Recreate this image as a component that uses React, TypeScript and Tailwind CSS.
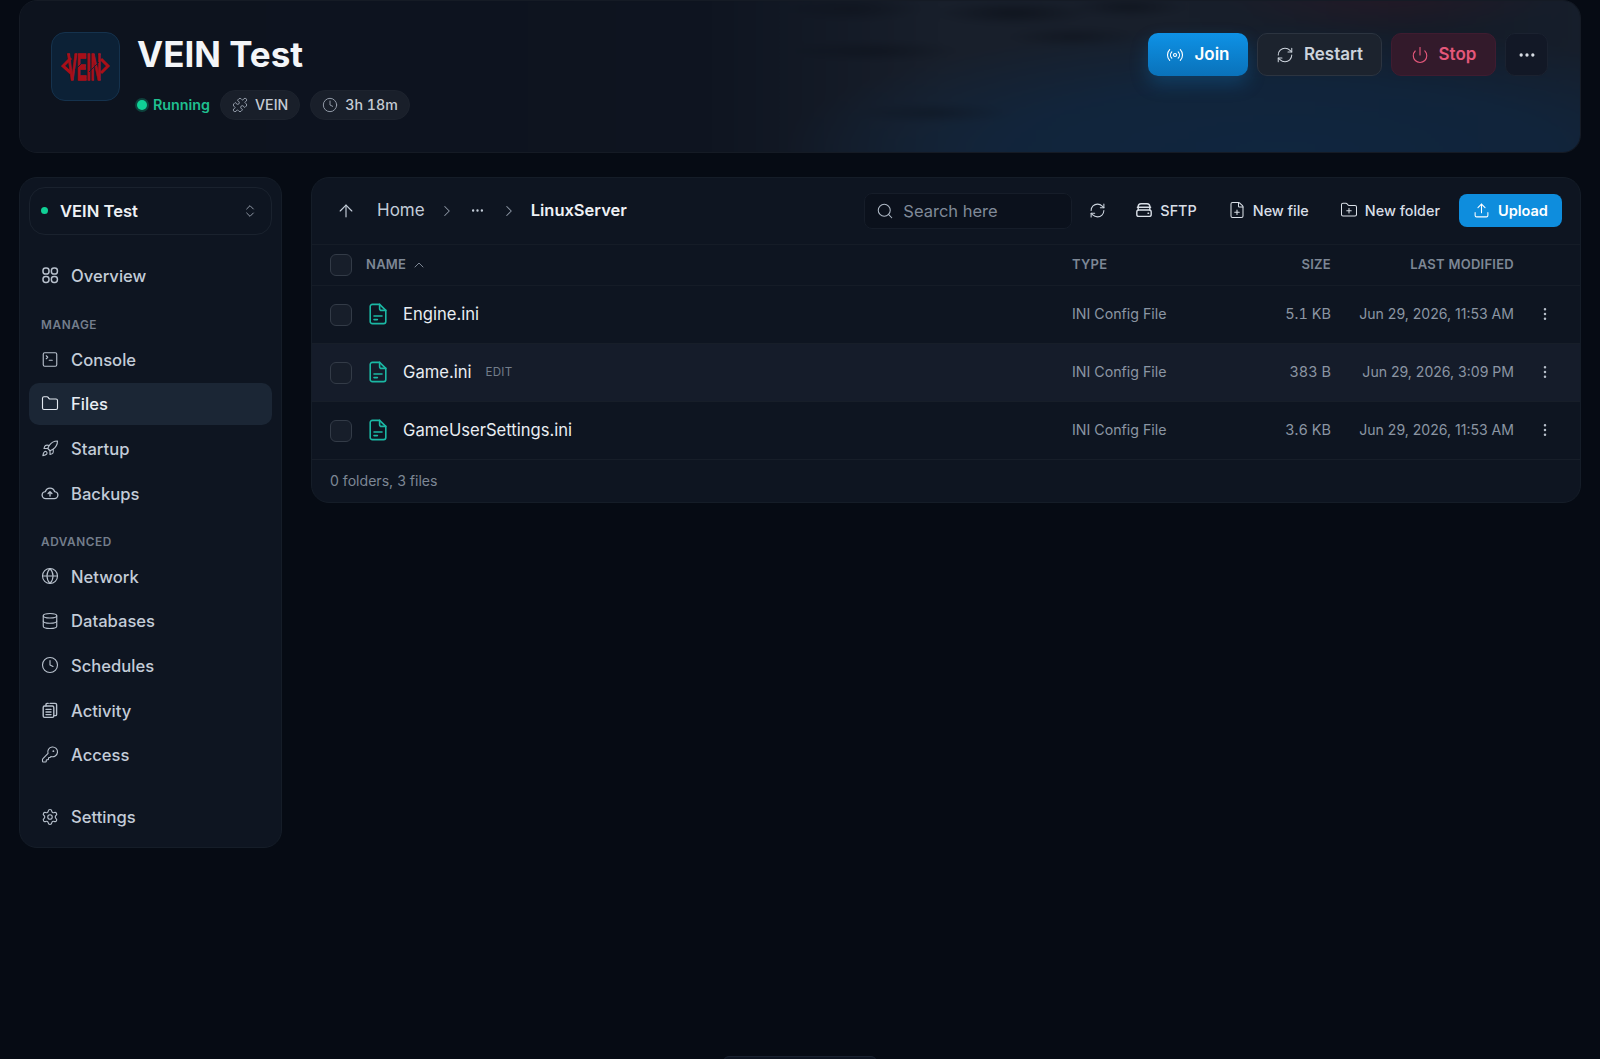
import {
  ArrowUp,
  ChevronRight,
  ChevronUp,
  ChevronsUpDown,
  Clock,
  Database,
  Ellipsis,
  EllipsisVertical,
  FilePlus,
  Folder,
  FolderPlus,
  Globe,
  KeyRound,
  Power,
  Puzzle,
  Radio,
  RefreshCw,
  Rocket,
  Search,
  Settings,
  SquareTerminal,
  Upload,
} from 'lucide-react'
import type { ReactNode } from 'react'

const font = { fontFamily: 'Inter, "Noto Sans", sans-serif' }

function OverviewIcon() {
  return (
    <svg width="18" height="18" viewBox="0 0 18 18" fill="none" stroke="currentColor" strokeWidth="1.5">
      <rect x="2" y="2" width="6" height="6" rx="2.6" />
      <rect x="10.4" y="2" width="6" height="6" rx="2.6" />
      <rect x="2" y="10.4" width="6" height="6" rx="2.6" />
      <rect x="10.4" y="10.4" width="6" height="6" rx="2.6" />
    </svg>
  )
}

function ActivityIcon() {
  return (
    <svg width="18" height="18" viewBox="0 0 18 18" fill="none" stroke="currentColor" strokeWidth="1.4" strokeLinejoin="round" strokeLinecap="round">
      <rect x="2.2" y="5" width="10.6" height="11.4" rx="1.4" />
      <path d="M5 5V3.4c0-.6.4-1 1-1h1.2M9 2.4h5.2c.8 0 1.4.6 1.4 1.4v9.6c0 .7-.5 1.2-1.2 1.2h-1.6" />
      <path d="M5 8.4h5M5 11h5M5 13.6h5" />
    </svg>
  )
}

function BackupIcon() {
  return (
    <svg width="20" height="20" viewBox="0 0 20 20" fill="none" stroke="currentColor" strokeWidth="1.5" strokeLinecap="round" strokeLinejoin="round">
      <path d="M5.4 16.2a3.9 3.9 0 0 1-.5-7.8 5.3 5.3 0 0 1 10.2 0 3.9 3.9 0 0 1-.5 7.8z" />
      <path d="M10 13.4V8.6M7.9 10.6 10 8.5l2.1 2.1" />
    </svg>
  )
}

function SftpIcon() {
  return (
    <svg width="18" height="18" viewBox="0 0 18 18" fill="none" stroke="currentColor" strokeWidth="1.4" strokeLinecap="round" strokeLinejoin="round">
      <path d="M3.2 9V5.6C3.2 3.8 4.4 2.8 6 2.8h6c1.6 0 2.8 1 2.8 2.8V9" />
      <rect x="1.8" y="9" width="14.4" height="6.4" rx="2" />
      <path d="M2.4 6.2h13.2" />
      <path d="M13 12.2h.6" />
    </svg>
  )
}

function IniIcon() {
  return (
    <svg width="18" height="22" viewBox="0 0 18 22" fill="none" stroke="#1bb8a4" strokeWidth="1.6" strokeLinecap="round" strokeLinejoin="round">
      <path d="M10.6 1.4H3.4A2.2 2.2 0 0 0 1.2 3.6v14.8a2.2 2.2 0 0 0 2.2 2.2h11.2a2.2 2.2 0 0 0 2.2-2.2V7.4z" />
      <path d="M10.6 1.4v4a2 2 0 0 0 2 2h4.2" />
      <path d="M5 13h8M5 16.6h3.4" />
    </svg>
  )
}

function VeinLogo() {
  return (
    <svg width="50" height="50" viewBox="0 -9 50 50">
      <text
        transform="translate(6 29) scale(0.56 1.45)"
        fontFamily="Liberation Sans, sans-serif"
        fontWeight="700"
        fontSize="26"
        fill="#a80f18"
        stroke="#a80f18"
        strokeWidth="0.9"
      >
        VEIN
      </text>
      {/* glitch smear across the middle of the wordmark */}
      <path d="M10 7 2 15l8 7" fill="none" stroke="#a80f18" strokeWidth="3" />
      <path d="M40 8l7 7-7 7" fill="none" stroke="#a80f18" strokeWidth="3" />
      <path d="M14 19 24 9M28 21 38 11" stroke="#0c2136" strokeWidth="0.9" />
    </svg>
  )
}

function Pill({ icon, children }: { icon: ReactNode; children: ReactNode }) {
  return (
    <div className="flex h-[30px] items-center gap-[7px] rounded-full border border-[#1d232e] bg-[#191f2a] px-[11px] text-[14.2px] font-medium tabular-nums text-[#c5cbd4]">
      {icon}
      {children}
    </div>
  )
}

function NavItem({ icon, label, active }: { icon: ReactNode; label: string; active?: boolean }) {
  return (
    <div className={`flex h-[42px] items-center gap-[12px] rounded-[10px] pl-[12px] text-[16.6px] font-medium ${active ? 'bg-[#1b2635] text-[#e9eef4]' : 'text-[#c3ccd8]'}`}>
      <span className={`flex w-[18px] justify-center ${active ? 'text-[#e2e8f0]' : 'text-[#b8c1cd]'}`}>{icon}</span>
      <span className="pt-[2px]">{label}</span>
    </div>
  )
}

function SectionLabel({ children, top }: { children: ReactNode; top: string }) {
  return <div className={`mb-[5px] h-[16px] pl-[12px] text-[11.8px] font-semibold uppercase leading-[16px] tracking-[0.05em] text-[#747e8c] ${top}`}>{children}</div>
}

const files = [
  { name: 'Engine.ini', size: '5.1 KB', date: 'Jun 29, 2026, 11:53 AM' },
  { name: 'Game.ini', size: '383 B', date: 'Jun 29, 2026, 3:09 PM', hover: true },
  { name: 'GameUserSettings.ini', size: '3.6 KB', date: 'Jun 29, 2026, 11:53 AM' },
]

function ToolButton({ icon, label }: { icon: ReactNode; label: string }) {
  return (
    <div className="flex items-center gap-[7px] text-[14.4px] font-medium text-[#d9dfe7]">
      {icon}
      {label}
    </div>
  )
}

export default function App() {
  return (
    <div style={font} className="relative h-[1059px] overflow-hidden bg-[#060b14] px-[19px]">
      {/* header */}
      <header className="relative flex h-[153px] items-start justify-between overflow-hidden rounded-[18px] border border-[#151b25] bg-[#0d131e] pl-[31px] pr-[32px] pt-[31px]">
        <div className="absolute inset-[-6px] blur-[3px] bg-[radial-gradient(ellipse_80px_12px_at_1000px_18px,rgba(9,13,21,0.6)_0%,rgba(9,13,21,0)_100%),radial-gradient(ellipse_60px_10px_at_1115px_12px,rgba(9,13,21,0.55)_0%,rgba(9,13,21,0)_100%),radial-gradient(ellipse_90px_10px_at_860px_56px,rgba(9,13,21,0.45)_0%,rgba(9,13,21,0)_100%),radial-gradient(ellipse_70px_10px_at_1060px_42px,rgba(9,13,21,0.45)_0%,rgba(9,13,21,0)_100%),radial-gradient(ellipse_80px_10px_at_920px_118px,rgba(9,13,21,0.38)_0%,rgba(9,13,21,0)_100%),radial-gradient(ellipse_70px_12px_at_840px_14px,rgba(9,13,21,0.42)_0%,rgba(9,13,21,0)_100%),radial-gradient(ellipse_170px_40px_at_1376px_0px,rgba(52,22,36,0.45)_0%,rgba(52,22,36,0)_100%),radial-gradient(ellipse_500px_130px_at_1266px_159px,#10263f_0%,rgba(16,38,63,0.8)_55%,rgba(16,38,63,0)_100%),linear-gradient(90deg,#0d131e_0px,#0e1420_686px,#181f2b_936px,#181f2b_1156px,#141b27_1406px,#161e2b_1574px)]" />
        <div className="relative flex items-start gap-[17px]">
          <div className="flex h-[69px] w-[69px] items-center justify-center rounded-[14px] border border-[#15324d] bg-[#0c2136]">
            <VeinLogo />
          </div>
          <div>
            <h1 className="text-[35px] font-bold leading-[44px] text-[#f3f5f8]">VEIN Test</h1>
            <div className="mt-[14px] flex items-center gap-[10px]">
              <div className="flex items-center gap-[6px] text-[14.3px] font-semibold text-[#1fbf8f]">
                <span className="h-[10px] w-[10px] rounded-full bg-[#10d096] shadow-[0_0_0_2px_rgba(16,208,150,0.25)]" />
                Running
              </div>
              <Pill icon={<Puzzle size={16} strokeWidth={1.4} className="text-[#9aa3af]" />}>VEIN</Pill>
              <Pill icon={<Clock size={16} strokeWidth={1.4} className="text-[#9aa3af]" />}>3h 18m</Pill>
            </div>
          </div>
        </div>
        <div className="relative mt-[1px] flex items-center gap-[9px] text-[17px] font-semibold">
          <button className="flex h-[43px] w-[100px] items-center justify-center gap-[10px] rounded-[10px] bg-gradient-to-b from-[#0e92e6] to-[#0a72ba] text-white shadow-[0_8px_18px_rgba(14,130,210,0.28)]">
            <Radio size={18} strokeWidth={1.5} />
            Join
          </button>
          <button className="flex h-[43px] w-[125px] items-center justify-center gap-[10px] rounded-[10px] border border-[#2c3440] bg-[#1c232e] text-[#ccd3dc]">
            <RefreshCw size={18} strokeWidth={1.4} />
            Restart
          </button>
          <button className="flex h-[43px] w-[105px] items-center justify-center gap-[10px] rounded-[10px] border border-[#3f1c30] bg-[#331a2b] text-[#e4577a]">
            <Power size={18} strokeWidth={1.5} />
            Stop
          </button>
          <button className="flex h-[43px] w-[43px] items-center justify-center rounded-[10px] border border-[#1b2230] bg-[#121826] text-[#d7dce3]">
            <Ellipsis size={20} strokeWidth={2} />
          </button>
        </div>
      </header>

      <div className="mt-[24px] flex items-start gap-[29px]">
        {/* sidebar */}
        <aside className="w-[263px] shrink-0 rounded-[18px] border border-[#151d28] bg-[#0e1521] px-[9px] pb-[9px] pt-[9px]">
          <div className="flex h-[48px] items-center justify-between rounded-[16px] border border-[#1a222e] pl-[11px] pr-[13px]">
            <div className="flex items-center gap-[12px] text-[16.6px] font-semibold text-[#eef1f5]">
              <span className="h-[7px] w-[7px] rounded-full bg-[#10d096]" />
              <span className="pt-[1px]">VEIN Test</span>
            </div>
            <ChevronsUpDown size={16} strokeWidth={1.4} className="text-[#9aa3af]" />
          </div>
          <div className="mt-[19px] flex flex-col">
            <NavItem icon={<OverviewIcon />} label="Overview" />
            <SectionLabel top="mt-[21px]">Manage</SectionLabel>
            <div className="flex flex-col gap-[2.7px]">
              <NavItem icon={<SquareTerminal size={19} strokeWidth={1.5} />} label="Console" />
              <NavItem icon={<Folder size={19} strokeWidth={1.5} />} label="Files" active />
              <NavItem icon={<Rocket size={19} strokeWidth={1.5} />} label="Startup" />
              <NavItem icon={<BackupIcon />} label="Backups" />
            </div>
            <SectionLabel top="mt-[20px]">Advanced</SectionLabel>
            <div className="flex flex-col gap-[2.7px]">
              <NavItem icon={<Globe size={18} strokeWidth={1.5} />} label="Network" />
              <NavItem icon={<Database size={18} strokeWidth={1.5} />} label="Databases" />
              <NavItem icon={<Clock size={18} strokeWidth={1.5} />} label="Schedules" />
              <NavItem icon={<ActivityIcon />} label="Activity" />
              <NavItem icon={<KeyRound size={19} strokeWidth={1.5} />} label="Access" />
            </div>
            <div className="mt-[20px]">
              <NavItem icon={<Settings size={18} strokeWidth={1.5} />} label="Settings" />
            </div>
          </div>
        </aside>

        {/* file manager */}
        <main className="min-w-0 flex-1 overflow-hidden rounded-[18px] border border-[#151d28] bg-[#0e1521]">
          <div className="flex h-[67px] items-center border-b border-[#151c27] pb-[1px] pl-[24px] pr-[18px]">
            <ArrowUp size={20} strokeWidth={1.4} className="mr-[21px] text-[#c3ccd8]" />
            <span className="text-[17px] text-[#c3ccd8]">Home</span>
            <ChevronRight size={18} strokeWidth={1.4} className="ml-[13px] mr-[14px] text-[#8b95a3]" />
            <Ellipsis size={15} strokeWidth={1.8} className="text-[#c3ccd8]" />
            <ChevronRight size={18} strokeWidth={1.4} className="ml-[15px] mr-[13px] text-[#8b95a3]" />
            <span className="text-[16.5px] font-semibold text-[#eef1f5]">LinuxServer</span>
            <div className="ml-auto flex h-[36px] w-[208px] items-center gap-[9px] rounded-[8px] border border-[#161d29] bg-[#0b111c] pl-[11px] text-[16.5px] text-[#808a98]">
              <Search size={18} strokeWidth={1.4} className="text-[#aeb8c5]" />
              <span className="pt-[1px]">Search here</span>
            </div>
            <RefreshCw size={17} strokeWidth={1.5} className="ml-[17px] text-[#cbd3dd]" />
            <div className="ml-[29px]"><ToolButton icon={<SftpIcon />} label="SFTP" /></div>
            <div className="ml-[31px]"><ToolButton icon={<FilePlus size={18} strokeWidth={1.4} />} label="New file" /></div>
            <div className="ml-[31px]"><ToolButton icon={<FolderPlus size={18} strokeWidth={1.4} />} label="New folder" /></div>
            <button className="ml-[19px] flex h-[33px] w-[103px] items-center justify-center gap-[8px] rounded-[8px] bg-[#0e8ddd] text-[14.5px] font-semibold text-white">
              <Upload size={17} strokeWidth={1.5} />
              Upload
            </button>
          </div>

          <div className="flex h-[41px] items-center border-b border-[#151c27] pl-[18px] text-[13px] font-semibold uppercase tracking-[0.02em] text-[#7d8795]">
            <span className="h-[22px] w-[22px] rounded-[6px] border border-[#333b47] bg-[#171e2a]" />
            <div className="ml-[14px] flex flex-1 items-center gap-[5px]">
              Name
              <ChevronUp size={16} strokeWidth={1.5} />
            </div>
            <div className="w-[150px]">Type</div>
            <div className="w-[109px] text-right">Size</div>
            <div className="w-[183px] text-right">Last modified</div>
            <div className="w-[66px]" />
          </div>

          {files.map((f) => (
            <div key={f.name} className={`flex h-[58px] items-center border-b border-[#171e29] pl-[18px] ${f.hover ? 'bg-[#151c2a]' : ''}`}>
              <span className="h-[22px] w-[22px] rounded-[6px] border border-[#333b47] bg-[#171e2a]" />
              <div className="ml-[17px] flex flex-1 items-center">
                <IniIcon />
                <span className="ml-[16px] text-[16.6px] font-normal text-[#e9edf2]">{f.name}</span>
                {f.hover && <span className="ml-[14px] text-[11.6px] tracking-[0.02em] text-[#737d8b]">EDIT</span>}
              </div>
              <div className="mb-[1px] w-[150px] text-[14.2px] text-[#8b95a3]">INI Config File</div>
              <div className="mb-[1px] w-[109px] text-right text-[14.5px] tabular-nums text-[#8b95a3]">{f.size}</div>
              <div className="mb-[1px] w-[183px] text-right text-[14.05px] text-[#8b95a3]">{f.date}</div>
              <div className="mb-[1px] flex w-[62px] justify-center text-[#b6bec9]">
                <EllipsisVertical size={16} strokeWidth={1.8} />
              </div>
              <div className="w-[4px]" />
            </div>
          ))}

          <div className="flex h-[42px] items-center pl-[18px] text-[14.1px] text-[#7d8795]">0 folders, 3 files</div>
        </main>
      </div>

      {/* dock peeking in at the bottom edge */}
      <div className="absolute bottom-[-8px] left-[723px] h-[11px] w-[154px] rounded-t-[6px] border border-[#1a2230] bg-[#0e1521]" />
    </div>
  )
}
